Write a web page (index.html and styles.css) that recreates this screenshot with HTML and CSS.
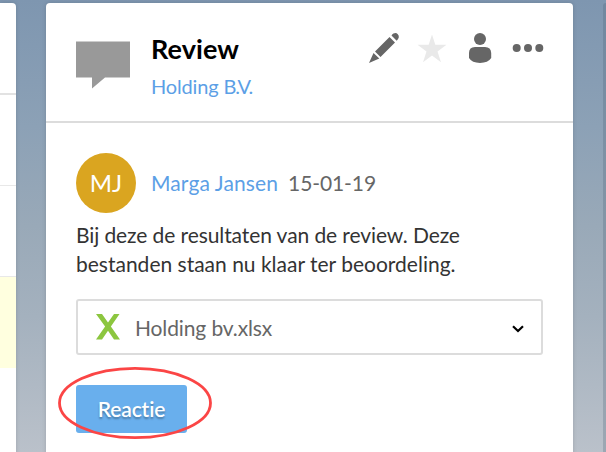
FILE: index.html
```html
<!DOCTYPE html>
<html lang="nl">
<head>
<meta charset="utf-8">
<title>Review</title>
<link rel="stylesheet" href="styles.css">
</head>
<body>
<div class="board">
  <aside class="list">
    <div class="row first"></div>
    <div class="row"></div>
    <div class="row"></div>
    <div class="row active"></div>
  </aside>
  <main class="panel">
    <header class="head">
      <svg class="bubble" width="54" height="48" viewBox="0 0 54 48"><path d="M0 .5H54V36.500H29L16 47.500V36.500H0Z" fill="#999"/></svg>
      <div class="titles">
        <h1>Review</h1>
        <a class="company">Holding <span class="suffix">B.V.</span></a>
      </div>
      <svg class="tools" width="178" height="34" viewBox="0 0 178 34">
        <g fill="#666">
          <path d="M3 32 7.500 22 13.300 27.500ZM9 20.500 23.500 6 29 11.500 14.500 26ZM25.500 4.500C27.500 2 30 1.300 31.800 3.200S33 7.500 30.700 9.700Z"/>
          <circle cx="114" cy="8" r="6"/>
          <path d="M109 16H119Q125 16 125.200 22V27Q122 31.900 114 31.900T103 27V22Q103 16 109 16Z"/>
          <circle cx="150.700" cy="17" r="4"/><circle cx="162" cy="17" r="4"/><circle cx="173.300" cy="17" r="4"/>
        </g>
        <path d="M66 3.500 69.300 13.800H80.500L71.500 20.500 75 31.200 66 24.600 57 31.200 60.500 20.500 51.500 13.800H62.700Z" fill="#e9e9e9"/>
      </svg>
    </header>
    <section class="content">
      <div class="author">
        <div class="avatar">MJ</div>
        <a class="name">Marga Jansen</a>
        <time>15-01-19</time>
      </div>
      <p class="message"><span class="lead">Bij deze de resultaten van de review. Deze</span><br>bestanden staan nu klaar ter beoordeling.</p>
      <div class="file">
        <svg width="24" height="26" viewBox="0 0 24 26"><path d="M0 0H6L12 8.600 18 0H23.500L14.900 12.400 24 25.500H18L12 16.700 6 25.500H0L9.100 12.400Z" fill="#8cc63f"/></svg>
        <span class="filename">Holding bv.xlsx</span>
        <svg class="chevron" width="12" height="8" viewBox="0 0 12 8"><path d="M1 1.200 6 6 11 1.200" fill="none" stroke="#000" stroke-width="2.200"/></svg>
      </div>
      <div class="action">
        <button>Reactie</button>
        <svg class="mark" width="158" height="76" viewBox="0 0 158 76"><ellipse cx="79" cy="38" rx="75.500" ry="34.700" fill="none" stroke="#fb4545" stroke-width="2.800"/></svg>
      </div>
    </section>
  </main>
  <aside class="next"></aside>
</div>
</body>
</html>
```
FILE: styles.css
```css
* { box-sizing: border-box; }
body {
  margin: 0;
  font-family: Lato, "Liberation Sans", sans-serif;
  font-size: 21px;
  color: #333;
}
.board {
  height: 452px;
  padding-top: 3px;
  display: grid;
  grid-template-columns: 16px 527px 3px;
  column-gap: 30px;
  overflow: hidden;
  background: linear-gradient(#7e96b0 0, #8ca1b6 28%, #99a9b8 50%, #a4b1be 70%, #bac1ca 100%);
}
.list { background: #fff; border-radius: 0 4px 0 0; box-shadow: 0 0 4px rgba(0, 0, 0, .15); }
.row { height: 91px; border-bottom: 1px solid #e8e8e8; }
.row.first { height: 92px; border-bottom: 2px solid #e2e2e2; }
.row.active { background: #ffffdf; border: 0; }
.panel { background: #fff; border-radius: 4px 4px 0 0; box-shadow: 0 0 4px rgba(0, 0, 0, .15); }
.next { background: rgba(70, 90, 110, .25); border-radius: 4px 0 0 0; }
.head {
  height: 120px;
  border-bottom: 2px solid #dcdcdc;
  padding: 28px 29px 0 30px;
  display: flex;
  align-items: flex-start;
}
.bubble { margin-top: 10px; }
.titles { margin-left: 21px; flex: 1; }
h1 { margin: 0; font-size: 27px; line-height: 36px; font-weight: 700; letter-spacing: .1px; color: #000; }
.company, .name { color: #5c9fe6; }
.company { display: block; font-size: 20px; line-height: 38px; letter-spacing: -.15px; }
.suffix { letter-spacing: -1.1px; }
.tools { flex: none; }
.content { padding: 30px; }
.author { display: flex; align-items: center; height: 60px; line-height: 26px; }
.avatar {
  width: 60px;
  height: 60px;
  border-radius: 50%;
  background: #daa520;
  color: #fff;
  font-size: 24px;
  line-height: 60px;
  text-align: center;
}
.name { margin: 0 0 0 15px; letter-spacing: .12px; }
time { margin: 0 0 0 10px; letter-spacing: -.1px; color: #666; }
.message { margin: 7px 0 0; line-height: 29px; white-space: nowrap; }
.lead { letter-spacing: -.09px; }
.file {
  margin-top: 21px;
  height: 56px;
  width: 467px;
  border: 2px solid #dcdcdc;
  border-radius: 3px;
  padding: 0 17px 0 18px;
  display: flex;
  align-items: center;
  color: #666;
}
.filename { margin-left: 15px; flex: 1; letter-spacing: -.12px; }
.chevron { margin-top: 4px; }
.action { position: relative; margin-top: 30px; }
button {
  display: block;
  width: 111px;
  height: 48px;
  padding: 0 0 2px;
  border: 0;
  border-radius: 3px;
  background: #69afed;
  color: #fff;
  font: 600 21px Lato, sans-serif;
  letter-spacing: -.15px;
  text-shadow: 0 2px 2px rgba(0, 0, 0, .3);
}
.mark { position: absolute; left: -20px; top: -20px; }
```
